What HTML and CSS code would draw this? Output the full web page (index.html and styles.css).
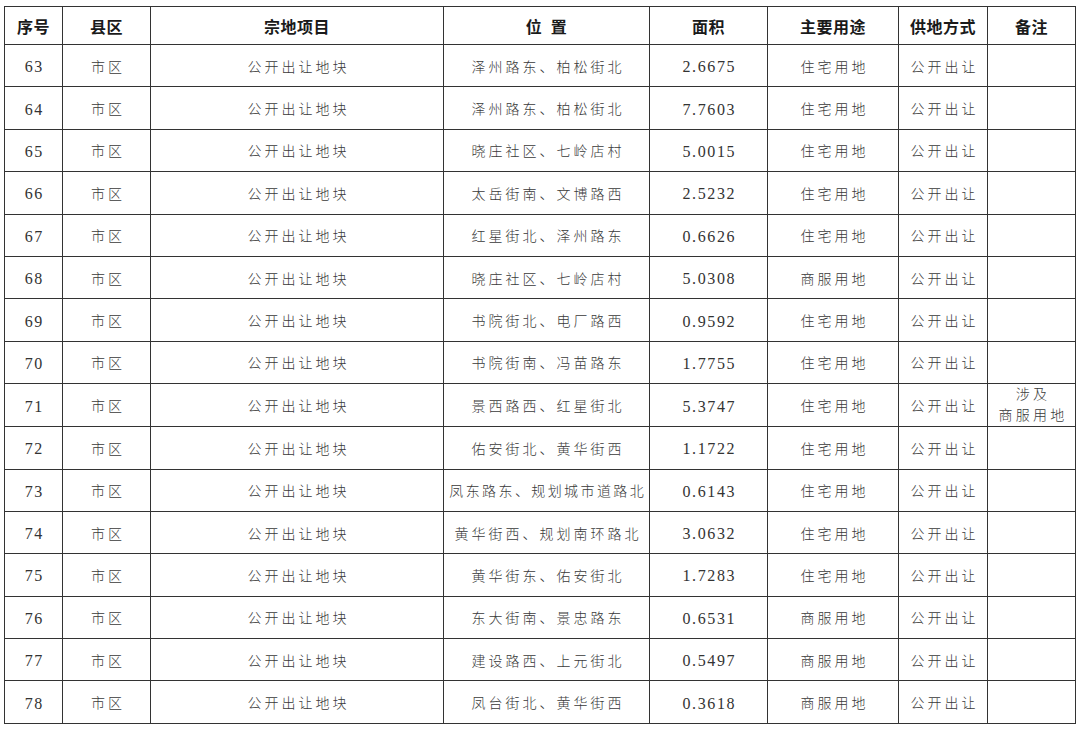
FILE: index.html
```html
<!DOCTYPE html>
<html lang="zh-CN">
<head>
<meta charset="utf-8">
<title>公开出让地块</title>
<link rel="stylesheet" href="styles.css">
</head>
<body>
<div class="page">
<table class="land">
<colgroup>
<col class="c-no"><col class="c-county"><col class="c-item"><col class="c-loc"><col class="c-area"><col class="c-use"><col class="c-way"><col class="c-note">
</colgroup>
<thead>
<tr><th>序号</th><th>县区</th><th>宗地项目</th><th>位&ensp;置</th><th>面积</th><th>主要用途</th><th>供地方式</th><th>备注</th></tr>
</thead>
<tbody>
<tr><td>63</td><td>市区</td><td>公开出让地块</td><td>泽州路东、柏松街北</td><td>2.6675</td><td>住宅用地</td><td>公开出让</td><td></td></tr>
<tr><td>64</td><td>市区</td><td>公开出让地块</td><td>泽州路东、柏松街北</td><td>7.7603</td><td>住宅用地</td><td>公开出让</td><td></td></tr>
<tr><td>65</td><td>市区</td><td>公开出让地块</td><td>晓庄社区、七岭店村</td><td>5.0015</td><td>住宅用地</td><td>公开出让</td><td></td></tr>
<tr><td>66</td><td>市区</td><td>公开出让地块</td><td>太岳街南、文博路西</td><td>2.5232</td><td>住宅用地</td><td>公开出让</td><td></td></tr>
<tr><td>67</td><td>市区</td><td>公开出让地块</td><td>红星街北、泽州路东</td><td>0.6626</td><td>住宅用地</td><td>公开出让</td><td></td></tr>
<tr><td>68</td><td>市区</td><td>公开出让地块</td><td>晓庄社区、七岭店村</td><td>5.0308</td><td>商服用地</td><td>公开出让</td><td></td></tr>
<tr><td>69</td><td>市区</td><td>公开出让地块</td><td>书院街北、电厂路西</td><td>0.9592</td><td>住宅用地</td><td>公开出让</td><td></td></tr>
<tr><td>70</td><td>市区</td><td>公开出让地块</td><td>书院街南、冯苗路东</td><td>1.7755</td><td>住宅用地</td><td>公开出让</td><td></td></tr>
<tr><td>71</td><td>市区</td><td>公开出让地块</td><td>景西路西、红星街北</td><td>5.3747</td><td>住宅用地</td><td>公开出让</td><td class="note">涉及<br>商服用地</td></tr>
<tr><td>72</td><td>市区</td><td>公开出让地块</td><td>佑安街北、黄华街西</td><td>1.1722</td><td>住宅用地</td><td>公开出让</td><td></td></tr>
<tr><td>73</td><td>市区</td><td>公开出让地块</td><td class="tight">凤东路东、规划城市道路北</td><td>0.6143</td><td>住宅用地</td><td>公开出让</td><td></td></tr>
<tr><td>74</td><td>市区</td><td>公开出让地块</td><td>黄华街西、规划南环路北</td><td>3.0632</td><td>住宅用地</td><td>公开出让</td><td></td></tr>
<tr><td>75</td><td>市区</td><td>公开出让地块</td><td>黄华街东、佑安街北</td><td>1.7283</td><td>住宅用地</td><td>公开出让</td><td></td></tr>
<tr><td>76</td><td>市区</td><td>公开出让地块</td><td>东大街南、景忠路东</td><td>0.6531</td><td>商服用地</td><td>公开出让</td><td></td></tr>
<tr><td>77</td><td>市区</td><td>公开出让地块</td><td>建设路西、上元街北</td><td>0.5497</td><td>商服用地</td><td>公开出让</td><td></td></tr>
<tr><td>78</td><td>市区</td><td>公开出让地块</td><td>凤台街北、黄华街西</td><td>0.3618</td><td>商服用地</td><td>公开出让</td><td></td></tr>
</tbody>
</table>
</div>
</body>
</html>
```

FILE: styles.css
```css
html, body {
  margin: 0;
  padding: 0;
  background: #ffffff;
}

.page {
  padding: 6px 0 0 4px;
}

.land {
  border-collapse: collapse;
  table-layout: fixed;
  width: 1071px;
}

.c-no { width: 58px; }
.c-county { width: 88px; }
.c-item { width: 293px; }
.c-loc { width: 206px; }
.c-area { width: 118px; }
.c-use { width: 131px; }
.c-way { width: 89px; }
.c-note { width: 88px; }

.land th,
.land td {
  border: 1px solid #333333;
  padding: 0;
  text-align: center;
  vertical-align: middle;
  white-space: nowrap;
  overflow: hidden;
}

.land th {
  height: 37px;
  font-family: "Noto Sans CJK SC", "Liberation Sans", sans-serif;
  font-weight: 700;
  font-size: 16px;
  letter-spacing: 0.5px;
  color: #1a1a1a;
}

.land td {
  height: 41.4px;
  font-family: "Liberation Serif", "Noto Sans CJK SC", serif;
  font-weight: 300;
  font-size: 14px;
  letter-spacing: 3px;
  color: #3a3a3a;
  text-indent: 3px;
}

.land td:nth-child(1),
.land td:nth-child(5) {
  font-size: 16px;
  font-weight: 400;
  letter-spacing: 1.6px;
  text-indent: 1.6px;
  padding-top: 3px;
  height: 38.4px;
  color: #333333;
}

.land td.tight {
  letter-spacing: 2.4px;
  text-indent: 2.4px;
}

.land td.note {
  line-height: 21px;
  letter-spacing: 3.2px;
  text-indent: 0;
  padding-left: 3px;
}
```
